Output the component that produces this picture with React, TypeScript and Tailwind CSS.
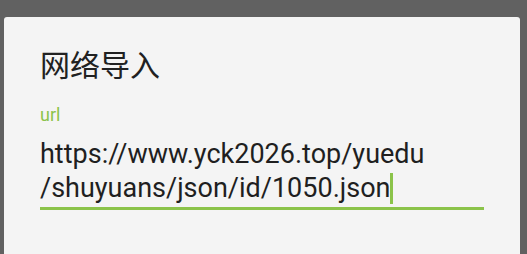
export default function App() {
  return (
    <div className="h-screen w-full overflow-hidden bg-[#616161] pt-[17px] pl-[4px]">
      <div className="w-[516px] h-[260px] rounded-t-[3px] bg-[#f4f4f4] pl-[36px] pt-[28px]">
        <h1 className="text-[30px] leading-[36px] text-[#212121] font-['Noto_Sans_CJK_SC',sans-serif]">
          网络导入
        </h1>
        <div className="mt-[24px] w-[444px]">
          <div className="text-[18px] leading-[20px] text-[#8bc34a] font-['Roboto',sans-serif]">url</div>
          <div className="mt-[12px] pb-[2px] border-b-[3px] border-[#8bc34a] font-['Roboto',sans-serif] text-[27px] leading-[34px] text-[#1f1f1f]">
            <div>https://www.yck2026.top/yuedu</div>
            <div className="flex items-center">
              <span>/shuyuans/json/id/1050.json</span>
              <span className="inline-block w-[3px] h-[31px] bg-[#8bc34a]" />
            </div>
          </div>
        </div>
      </div>
    </div>
  );
}
